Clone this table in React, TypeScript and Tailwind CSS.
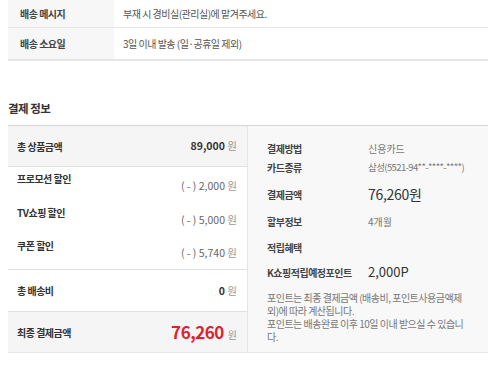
const font = '[font-family:"Noto_Sans_CJK_KR","Noto_Sans",sans-serif]';

const DeliveryRow = ({ label, value, last }: { label: string; value: string; last?: boolean }) => (
  <div className={`flex ${last ? 'h-[33px] border-b-2 border-[#e6e6e6]' : 'h-[28px] border-b border-[#e6e6e6]'}`}>
    <div className="w-[106px] bg-[#f7f7f7] pl-3 flex items-center text-[10px] font-bold text-[#444] tracking-[-0.5px]">
      {label}
    </div>
    <div className="pl-[9px] flex items-center text-[10px] text-[#555] tracking-[-0.5px]">{value}</div>
  </div>
);

const Discount = ({ label, value }: { label: string; value: string }) => (
  <div className="flex justify-between h-[33.5px] pr-[10px]">
    <span className="text-[10px] font-bold text-[#333] tracking-[-0.5px]">{label}</span>
    <span className="mt-[7px] text-[10.5px] text-[#666]">
      ( - ) {value} <span className="text-[#999]">원</span>
    </span>
  </div>
);

const InfoRow = ({ label, children, className }: { label: string; children?: React.ReactNode; className?: string }) => (
  <div className={`flex items-center h-[18px] ${className ?? ''}`}>
    <span className="w-[101px] text-[10px] font-bold text-[#444] tracking-[-0.5px]">{label}</span>
    {children}
  </div>
);

export default function App() {
  return (
    <div className={`w-[500px] h-[370px] bg-white px-2 overflow-hidden ${font}`}>
      <div className="w-[480px]">
        <DeliveryRow label="배송 메시지" value="부재 시 경비실(관리실)에 맡겨주세요." />
        <DeliveryRow label="배송 소요일" value="3일 이내 발송 (일·공휴일 제외)" last />
      </div>

      <h2 className="mt-[39px] text-[11.5px] font-bold text-[#333] tracking-[-0.5px] leading-4">결제 정보</h2>

      <div className="mt-[9px] w-[480px] flex border-t border-[#d4d4d4] border-b border-b-[#e6e6e6]">
        <div className="w-[240px] border-r border-[#e6e6e6]">
          <div className="h-[41px] bg-[#f5f5f5] border-b border-[#e0e0e0] flex items-center justify-between pl-[9px] pr-[10px]">
            <span className="text-[10px] font-bold text-[#333] tracking-[-0.5px]">총 상품금액</span>
            <span className="text-[10.5px] font-bold text-[#333]">
              89,000 <span className="font-normal text-[#999]">원</span>
            </span>
          </div>
          <div className="pt-[4px] pl-[9px] h-[103px] border-b border-[#e0e0e0]">
            <Discount label="프로모션 할인" value="2,000" />
            <Discount label="TV쇼핑 할인" value="5,000" />
            <Discount label="쿠폰 할인" value="5,740" />
          </div>
          <div className="h-[42px] border-b border-[#e0e0e0] flex items-center justify-between pl-[9px] pr-[10px]">
            <span className="text-[10px] font-bold text-[#333] tracking-[-0.5px]">총 배송비</span>
            <span className="text-[10.5px] font-bold text-[#333]">
              0 <span className="font-normal text-[#999]">원</span>
            </span>
          </div>
          <div className="h-[40px] bg-[#f5f5f5] flex items-center justify-between pl-[9px] pr-[10px]">
            <span className="text-[10px] font-bold text-[#333] tracking-[-0.5px]">최종 결제금액</span>
            <span className="flex items-baseline gap-[4px]">
              <span className="text-[17px] font-bold text-[#e0202e] tracking-[-0.5px]">76,260</span>
              <span className="text-[10px] text-[#999]">원</span>
            </span>
          </div>
        </div>

        <div className="flex-1 bg-[#f8f8f8] pl-[19px] pt-[13px]">
          <InfoRow label="결제방법">
            <span className="text-[10px] text-[#777]">신용카드</span>
          </InfoRow>
          <InfoRow label="카드종류" className="mt-[1px]">
            <span className="text-[9.5px] text-[#777] tracking-[-0.6px]">삼성(5521-94**-****-****)</span>
          </InfoRow>
          <InfoRow label="결제금액" className="mt-[9px]">
            <span className="text-[14px] text-[#333] tracking-[-0.3px]">76,260원</span>
          </InfoRow>
          <InfoRow label="할부정보" className="mt-[9px]">
            <span className="text-[10px] text-[#777]">4개월</span>
          </InfoRow>
          <InfoRow label="적립혜택" className="mt-[8px]" />
          <InfoRow label="K쇼핑적립예정포인트" className="mt-[7px]">
            <span className="text-[13px] text-[#333]">2,000P</span>
          </InfoRow>
          <p className="mt-[10px] text-[10px] leading-[13px] text-[#777] tracking-[-0.5px] whitespace-nowrap">
            포인트는 최종 결제금액 (배송비, 포인트사용금액제
            <br />
            외)에 따라 계산됩니다.
            <br />
            포인트는 배송완료 이후 10일 이내 받으실 수 있습니
            <br />
            다.
          </p>
        </div>
      </div>
    </div>
  );
}
